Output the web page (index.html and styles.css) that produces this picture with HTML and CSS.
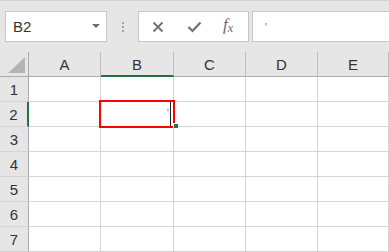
FILE: index.html
```html
<!DOCTYPE html>
<html>
<head>
<meta charset="utf-8">
<link rel="stylesheet" href="styles.css">
</head>
<body>
<div class="toolbar">
  <div class="namebox">
    <span class="ref">B2</span>
    <span class="caret"></span>
  </div>
  <div class="grip"><i></i><i></i><i></i></div>
  <div class="buttons">
    <svg class="ico" width="12" height="12" viewBox="0 0 12 12"><path d="M1.5 1.5 L10.5 10.5 M10.5 1.5 L1.5 10.5" stroke="#707070" stroke-width="1.8" fill="none"/></svg>
    <svg class="ico" width="15" height="12" viewBox="0 0 15 12"><path d="M1.5 6 L5.5 10 L13.5 1.5" stroke="#707070" stroke-width="2.2" fill="none"/></svg>
    <span class="fx">f<sub>x</sub></span>
  </div>
  <div class="formula"><span class="apos">'</span></div>
</div>
<div class="sheet">
  <div class="grid">
    <div class="corner"><span class="tri"></span></div>
    <div class="ch">A</div>
    <div class="ch active">B</div>
    <div class="ch">C</div>
    <div class="ch">D</div>
    <div class="ch">E</div>

    <div class="rh">1</div><div class="c"></div><div class="c"></div><div class="c"></div><div class="c"></div><div class="c"></div>
    <div class="rh active">2</div><div class="c"></div><div class="c"></div><div class="c"></div><div class="c"></div><div class="c"></div>
    <div class="rh">3</div><div class="c"></div><div class="c"></div><div class="c"></div><div class="c"></div><div class="c"></div>
    <div class="rh">4</div><div class="c"></div><div class="c"></div><div class="c"></div><div class="c"></div><div class="c"></div>
    <div class="rh">5</div><div class="c"></div><div class="c"></div><div class="c"></div><div class="c"></div><div class="c"></div>
    <div class="rh">6</div><div class="c"></div><div class="c"></div><div class="c"></div><div class="c"></div><div class="c"></div>
    <div class="rh">7</div><div class="c"></div><div class="c"></div><div class="c"></div><div class="c"></div><div class="c"></div>
  </div>
  <div class="sel">
    <span class="sel-apos">'</span>
    <span class="cursor"></span>
    <span class="handle"></span>
  </div>
</div>
</body>
</html>
```

FILE: styles.css
```css
* { box-sizing: border-box; }
html, body { margin: 0; padding: 0; }
body {
  width: 389px;
  height: 252px;
  overflow: hidden;
  background: #e6e6e6;
  font-family: "Liberation Sans", Arial, sans-serif;
  color: #333;
}
.toolbar {
  height: 52px;
  border-top: 1px solid #d2d2d2;
  padding: 10px 0 0 5px;
  display: flex;
  align-items: flex-start;
}
.namebox {
  width: 102px;
  height: 31px;
  background: #fff;
  border: 1px solid #c6c6c6;
  display: flex;
  align-items: center;
  justify-content: space-between;
  padding: 0 6px 0 7px;
}
.ref { font-size: 15px; color: #333; }
.caret {
  width: 0; height: 0;
  border-left: 4px solid transparent;
  border-right: 4px solid transparent;
  border-top: 4px solid #6a6a6a;
  margin-top: -2px;
}
.grip {
  width: 31px;
  height: 31px;
  display: flex;
  flex-direction: column;
  align-items: center;
  justify-content: center;
  gap: 2px;
}
.grip i { display: block; width: 2px; height: 2px; background: #a6a6a6; }
.buttons {
  width: 111px;
  height: 31px;
  background: #fff;
  border: 1px solid #c6c6c6;
  display: flex;
  align-items: center;
  padding: 0 0 0 13px;
}
.buttons .ico:nth-child(1) { margin-right: 23px; }
.buttons .ico:nth-child(2) { margin-right: 21px; }
.fx {
  font-family: "Liberation Serif", "Times New Roman", serif;
  font-style: italic;
  font-size: 17px;
  color: #6a6a6a;
  line-height: 1;
  margin-top: -3px;
}
.fx sub { font-size: 12px; vertical-align: -2px; }
.formula {
  flex: 1;
  height: 31px;
  margin-left: 3px;
  background: #fff;
  border: 1px solid #c6c6c6;
  border-right: none;
  padding: 5px 0 0 12px;
}
.apos { font-size: 10px; color: #b05050; line-height: 1; }
.sheet { position: relative; }
.grid {
  display: grid;
  grid-template-columns: 29px 72px 73px 72px 72px 71px;
  grid-template-rows: 25px repeat(7, 25px);
  background: #fff;
}
.corner, .ch, .rh {
  background: #e6e6e6;
  border-right: 1px solid #bdbdbd;
  border-bottom: 1px solid #bdbdbd;
}
.corner { position: relative; border-bottom-color: #ababab; border-right-color: #ababab; }
.tri {
  position: absolute;
  right: 3px;
  bottom: 3px;
  width: 0; height: 0;
  border-left: 17px solid transparent;
  border-bottom: 16px solid #b4b4b4;
}
.ch {
  display: flex;
  align-items: center;
  justify-content: center;
  font-size: 15px;
  color: #333;
  border-bottom-color: #ababab;
  padding-top: 1px;
}
.ch.active { border-bottom: 2px solid #217346; }
.rh {
  display: flex;
  align-items: center;
  justify-content: center;
  font-size: 15px;
  color: #333;
  border-bottom-color: #d4d4d4;
  border-right-color: #ababab;
}
.rh.active { border-right: 2px solid #217346; }
.c {
  border-right: 1px solid #d4d4d4;
  border-bottom: 1px solid #d4d4d4;
}
.sel {
  position: absolute;
  left: 99px;
  top: 48px;
  width: 76px;
  height: 28px;
  border: 2px solid #ff0000;
}
.sel-apos {
  position: absolute;
  left: 66px;
  top: 7px;
  font-size: 10px;
  line-height: 1;
  color: #b05050;
}
.cursor {
  position: absolute;
  left: 69px;
  top: 0;
  width: 1px;
  height: 24px;
  background: #222;
}
.handle {
  position: absolute;
  left: 72px;
  top: 21px;
  width: 5px;
  height: 5px;
  background: #217346;
  border: 1px solid #fff;
  border-right: none;
  border-bottom: none;
}
```
